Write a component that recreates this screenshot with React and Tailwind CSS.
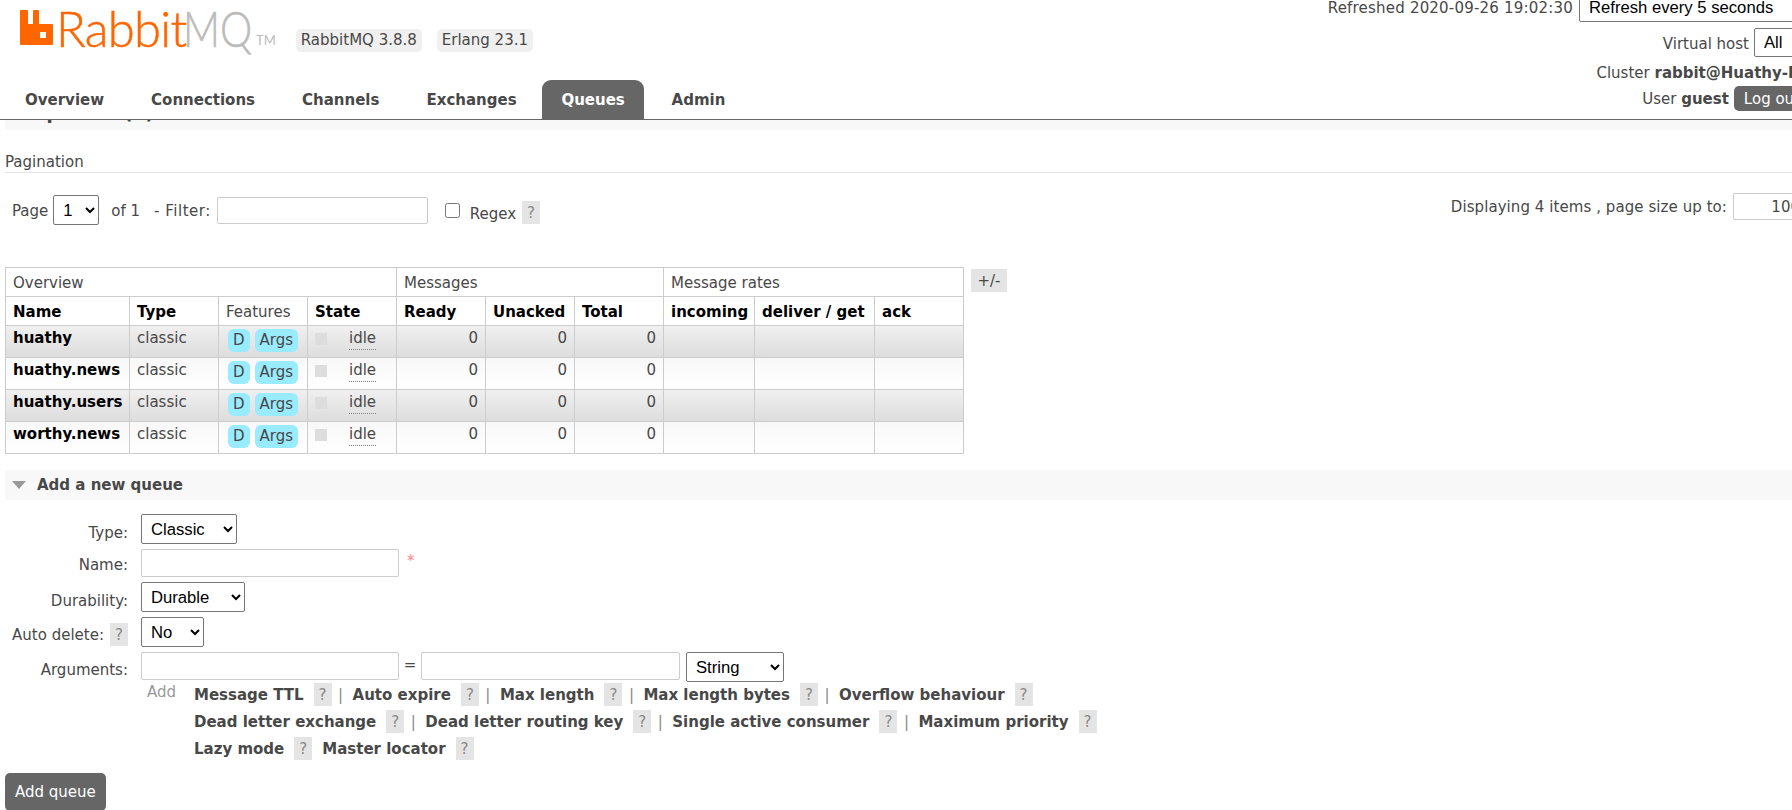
import React from "react";

const tabs = ["Overview", "Connections", "Channels", "Exchanges", "Queues", "Admin"];
const queues = ["huathy", "huathy.news", "huathy.users", "worthy.news"];
const argRows = [
  [["Message TTL", true], ["Auto expire", true], ["Max length", true], ["Max length bytes", true], ["Overflow behaviour", false]],
  [["Dead letter exchange", true], ["Dead letter routing key", true], ["Single active consumer", true], ["Maximum priority", false]],
];

const Help = ({ className = "" }) => (
  <span className={`inline-flex h-[23px] w-[18px] shrink-0 items-center justify-center bg-[#e4e4e4] text-[#888] ${className}`}>?</span>
);

const Select = ({ className = "", options }) => (
  <select className={`shrink-0 rounded-[2px] border border-[#767676] bg-white pl-[5px] font-['Liberation_Sans',sans-serif] text-[16.67px] text-black ${className}`}>
    {options.map((o) => (
      <option key={o}>{o}</option>
    ))}
  </select>
);

const Input = ({ className = "" }) => (
  <input className={`shrink-0 rounded-[2px] border border-[#ccc] bg-white ${className}`} />
);

const Logo = () => (
  <div className="flex h-[50px] items-start pl-5">
    <svg width="33" height="35" viewBox="0 0 33 35" className="mt-[10px] shrink-0">
      <path
        fillRule="evenodd"
        fill="#ff6600"
        d="M1 0H7a1 1 0 0 1 1 1V14H13V1a1 1 0 0 1 1-1H18a1 1 0 0 1 1 1V14H32a1 1 0 0 1 1 1V34a1 1 0 0 1-1 1H1a1 1 0 0 1-1-1V1a1 1 0 0 1 1-1ZM20 22V28H26V22Z"
      />
    </svg>
    <span className="mt-[3px] ml-[3px] w-[127px] font-['Lato',sans-serif] text-[49px] leading-[50px] font-light tracking-[-0.7px] text-[#ff6600] [-webkit-text-stroke:0.5px_#ff6600]">Rabbit</span>
    <span className="mt-[3px] w-[73px] origin-left scale-x-[0.83] font-['Lato',sans-serif] text-[49px] leading-[50px] font-light text-[#bbb] [-webkit-text-stroke:0.5px_#bbb]">MQ</span>
    <span className="mt-[33px] font-['Lato',sans-serif] text-[13px] leading-[14px] text-[#bbb]">TM</span>
    <span className="mt-[29px] ml-[20px] rounded-[5px] bg-[#f0f0f0] px-[5px] py-[2px] whitespace-nowrap leading-[19px]">RabbitMQ 3.8.8</span>
    <span className="mt-[29px] ml-[15px] rounded-[5px] bg-[#f0f0f0] px-[5px] py-[2px] whitespace-nowrap leading-[19px]">Erlang 23.1</span>
  </div>
);

const Header = () => (
  <header className="flex h-[120px] justify-between border-b border-[#666]">
    <div>
      <Logo />
      <nav className="mt-[30px] flex pl-[1.5px]">
        {tabs.map((t) =>
          t === "Queues" ? (
            <span key={t} className="mr-[4px] ml-[2px] flex h-[39px] w-[102px] items-center justify-center rounded-t-[9px] bg-[#666] font-bold text-white">{t}</span>
          ) : (
            <span key={t} className="flex h-[39px] items-center px-[23.5px] font-bold text-[#484848]">{t}</span>
          )
        )}
      </nav>
    </div>
    <div className="flex flex-col items-end">
      <div className="-mt-[8px] mr-[-30px] flex items-center gap-[6px]">
        <span className="mt-[1px] whitespace-nowrap tracking-[0.2px]">Refreshed 2020-09-26 19:02:30</span>
        <Select className="h-[30px] w-[243px]" options={["Refresh every 5 seconds"]} />
      </div>
      <div className="mt-[6px] mr-[-20px] flex items-center gap-[5px]">
        <span className="mt-[2px]">Virtual host</span>
        <Select className="h-[29px] w-[58px]" options={["All"]} />
      </div>
      <div className="mt-[6px] mr-[-18px] whitespace-nowrap">
        Cluster <b>rabbit@Huathy-PC</b>
      </div>
      <div className="mt-[3px] mr-[-18px] flex items-center gap-[5px]">
        <span>User <b>guest</b></span>
        <span className="flex h-[25px] items-center rounded-[5px] bg-[#666] px-[10px] whitespace-nowrap text-white">Log out</span>
      </div>
    </div>
  </header>
);

const Pagination = () => (
  <section className="pl-[5px]">
    <div className="h-[10px] overflow-hidden bg-[#f8f8f8]">
      <div className="-mt-[20px] text-[19px] leading-[24px] font-bold">All queues (4)</div>
    </div>
    <div className="mt-[22px] h-[21px] border-b border-[#e4e4e4]">Pagination</div>
    <div className="mr-[-30px] flex items-start justify-between pt-[22px] pl-[7px]">
      <div className="flex items-center">
        <span className="mt-[1px]">Page</span>
        <Select className="ml-[5px] h-[30px] w-[46px]" options={["1"]} />
        <span className="mt-[1px] ml-[12px]">of 1</span>
        <span className="mt-[1px] ml-[14px] tracking-[0.5px]">- Filter:</span>
        <Input className="ml-[6px] h-[27px] w-[211px]" />
        <input type="checkbox" className="ml-[17px] h-[15px] w-[15px]" />
        <span className="mt-[7px] ml-[10px]">Regex</span>
        <Help className="mt-[5px] ml-[6px]" />
      </div>
      <div className="-mt-[2px] flex items-center gap-[6px]">
        <span className="tracking-[0.07px]">Displaying 4 items , page size up to:</span>
        <input defaultValue="100" className="h-[27px] w-[89px] rounded-[2px] border border-[#ccc] pr-[21px] text-right" />
      </div>
    </div>
  </section>
);

const Th = ({ children, className = "" }) => (
  <th className={`border border-[#ccc] px-[7px] pt-[1px] text-left align-middle ${className}`}>{children}</th>
);

const Td = ({ children, className = "" }) => (
  <td className={`border border-[#ccc] px-[7px] pt-[2px] align-top ${className}`}>{children}</td>
);

const Pill = ({ children }) => (
  <span className="mt-[1px] inline-block rounded-[6px] bg-[#99ebff] px-[5px] leading-[23px]">{children}</span>
);

const QueueTable = () => (
  <div className="mt-[42px] flex items-start pl-[5px]">
    <table className="w-[959px] table-fixed border-collapse">
      <colgroup>
        <col className="w-[124px]" />
        <col className="w-[89px]" />
        <col className="w-[89px]" />
        <col className="w-[89px]" />
        <col className="w-[89px]" />
        <col className="w-[89px]" />
        <col className="w-[89px]" />
        <col className="w-[91px]" />
        <col className="w-[120px]" />
        <col className="w-[89px]" />
      </colgroup>
      <thead>
        <tr className="h-[29px]">
          <th colSpan={4} className="border border-[#ccc] px-[7px] pt-[1px] text-left font-normal">Overview</th>
          <th colSpan={3} className="border border-[#ccc] px-[7px] pt-[1px] text-left font-normal">Messages</th>
          <th colSpan={3} className="border border-[#ccc] px-[7px] pt-[1px] text-left font-normal">Message rates</th>
        </tr>
        <tr className="h-[29px] text-black">
          <Th>Name</Th>
          <Th>Type</Th>
          <Th className="font-normal text-[#484848]">Features</Th>
          <Th>State</Th>
          <Th>Ready</Th>
          <Th>Unacked</Th>
          <Th>Total</Th>
          <Th>incoming</Th>
          <Th>deliver / get</Th>
          <Th>ack</Th>
        </tr>
      </thead>
      <tbody>
        {queues.map((q, i) => (
          <tr key={q} className={`h-[32px] ${i % 2 === 0 ? "bg-gradient-to-b from-[#f0f0f0] to-[#dcdcdc]" : "bg-gradient-to-b from-[#f8f8f8] to-white"}`}>
            <Td className="font-bold whitespace-nowrap text-black">{q}</Td>
            <Td>classic</Td>
            <Td className="whitespace-nowrap">
              <div className="flex gap-[5px] pl-[2px]">
                <Pill>D</Pill>
                <Pill>Args</Pill>
              </div>
            </Td>
            <Td>
              <div className="flex items-center">
                <span className="h-[12px] w-[12px] bg-[#ddd]" />
                <span className="ml-[22px] border-b border-dotted border-[#888] leading-[21px]">idle</span>
              </div>
            </Td>
            <Td className="text-right">0</Td>
            <Td className="text-right">0</Td>
            <Td className="text-right">0</Td>
            <Td />
            <Td />
            <Td />
          </tr>
        ))}
      </tbody>
    </table>
    <span className="mt-[2px] ml-[7px] flex h-[23px] w-[36px] items-center justify-center bg-[#e4e4e4]">+/-</span>
  </div>
);

const FormRow = ({ label, help, labelClass = "mt-[6px]", children }) => (
  <div className="flex items-start">
    <div className={`flex w-[123px] shrink-0 items-center justify-end gap-[6px] ${labelClass}`}>
      <span className="whitespace-nowrap">{label}</span>
      {help && <Help />}
    </div>
    <div className="ml-[13px] flex items-start">{children}</div>
  </div>
);

const ArgLinks = ({ items }) => (
  <div className="flex h-[27px] items-center font-bold">
    {items.map(([name, sep]) => (
      <React.Fragment key={name}>
        <span className="whitespace-nowrap">{name}</span>
        <Help className="ml-[10px] font-normal" />
        {sep && <span className="mr-[9px] ml-[6px] w-[6px] text-center font-normal text-[#888]">|</span>}
      </React.Fragment>
    ))}
  </div>
);

const AddQueue = () => (
  <section className="mt-[16px] pl-[5px]">
    <div className="flex h-[30px] items-center bg-[#f8f8f8] pl-[7px]">
      <span className="h-0 w-0 border-x-[7px] border-t-[8px] border-x-transparent border-t-[#999]" />
      <span className="ml-[11px] font-bold">Add a new queue</span>
    </div>
    <div className="mt-[14px] flex flex-col gap-[5px]">
      <FormRow label="Type:" labelClass="mt-[9px]">
        <Select className="h-[30px] w-[96px]" options={["Classic"]} />
      </FormRow>
      <FormRow label="Name:">
        <Input className="h-[28px] w-[258px]" />
        <span className="mt-[2px] ml-[8px] text-[#f88]">*</span>
      </FormRow>
      <FormRow label="Durability:" labelClass="mt-[9px]">
        <Select className="h-[30px] w-[104px]" options={["Durable"]} />
      </FormRow>
      <FormRow label="Auto delete:" help>
        <Select className="h-[30px] w-[63px]" options={["No"]} />
      </FormRow>
      <FormRow label="Arguments:" labelClass="mt-[8px]">
        <Input className="h-[28px] w-[258px]" />
        <span className="mt-[3px] w-[22px] text-center">=</span>
        <Input className="h-[28px] w-[259px]" />
        <Select className="ml-[6px] h-[30px] w-[98px]" options={["String"]} />
      </FormRow>
    </div>
    <div className="-mt-[1px] flex pl-[142px]">
      <span className="mt-[1px] w-[47px] text-[#999]">Add</span>
      <div>
        {argRows.map((items, i) => (
          <ArgLinks key={i} items={items} />
        ))}
        <div className="flex h-[27px] items-center font-bold">
          <span>Lazy mode</span>
          <Help className="ml-[10px] font-normal" />
          <span className="ml-[10px]">Master locator</span>
          <Help className="ml-[10px] font-normal" />
        </div>
      </div>
    </div>
    <span className="mt-[11px] inline-block rounded-[5px] bg-[#666] px-[10px] py-[9px] text-white">Add queue</span>
  </section>
);

export default function App() {
  return (
    <div className="h-[810px] w-[1792px] overflow-hidden bg-white font-['DejaVu_Sans',Verdana,sans-serif] text-[15px] leading-[20px] text-[#484848]">
      <Header />
      <Pagination />
      <QueueTable />
      <AddQueue />
    </div>
  );
}
